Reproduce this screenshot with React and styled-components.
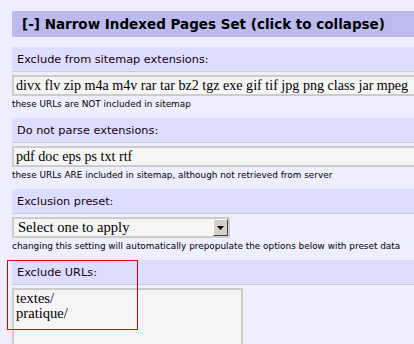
import React from "react";
import styled, { createGlobalStyle } from "styled-components";

const GlobalStyle = createGlobalStyle`
  html, body { margin: 0; padding: 0; background: #eeeeff; }
  body { overflow: hidden; width: 414px; height: 344px; }
`;

const Page = styled.div`
  position: relative;
  padding: 11px 0 0 12px;
  width: 500px;
  font-family: "DejaVu Sans", Verdana, sans-serif;
  color: #000;
`;

const Header = styled.div`
  height: 26px;
  line-height: 26px;
  background: #bbbbee;
  padding-left: 10px;
  font-weight: bold;
  font-size: 13.5px;
  white-space: nowrap;
`;

const Section = styled.div`
  margin-top: ${(p) => (p.$first ? "10px" : "0")};
  padding-bottom: 7px;
`;

const Label = styled.div`
  height: 24px;
  line-height: 25px;
  background: #ddddff;
  border-bottom: 1px solid #cccccc;
  padding-left: 5px;
  font-size: 11.3px;
  white-space: nowrap;
  color: #1a0010;
`;

const TextInput = styled.div`
  margin-top: 3px;
  height: 21px;
  box-sizing: border-box;
  border: 2px solid #cccccc;
  border-right: none;
  background: #f5f5f5;
  font-family: "Liberation Serif", "Times New Roman", serif;
  font-size: 14.1px;
  line-height: 17px;
  padding-left: 2px;
  white-space: nowrap;
  overflow: hidden;
`;

const Hint = styled.div`
  height: 13px;
  line-height: 13px;
  font-size: 8.9px;
  white-space: nowrap;
  color: #000;
  margin-top: 2px;
`;

const SelectBox = styled.div`
  margin-top: 3px;
  width: 218px;
  height: 21px;
  box-sizing: border-box;
  border: 2px solid #cccccc;
  background: #f5f5f5;
  display: flex;
  align-items: stretch;
`;

const SelectText = styled.div`
  flex: 1;
  font-family: "Liberation Serif", "Times New Roman", serif;
  font-size: 14.6px;
  line-height: 17px;
  padding-left: 4px;
  white-space: nowrap;
`;

const SelectButton = styled.div`
  width: 15px;
  box-sizing: border-box;
  background: #d4d0c8;
  border: 1px solid;
  border-color: #ffffff #404040 #404040 #ffffff;
  display: flex;
  align-items: center;
  justify-content: center;
`;

const TextArea = styled.div`
  margin-top: 3px;
  width: 231px;
  height: 80px;
  box-sizing: border-box;
  border: 2px solid #cccccc;
  border-bottom: none;
  background: #f5f5f5;
  font-family: "Liberation Serif", "Times New Roman", serif;
  font-size: 14.6px;
  line-height: 15px;
  padding: 1px 2px;
`;

const Highlight = styled.div`
  position: absolute;
  left: 7px;
  top: 260px;
  width: 131px;
  height: 70px;
  box-sizing: border-box;
  border: 1px solid #e00000;
  pointer-events: none;
`;

export default function App() {
  return (
    <>
      <GlobalStyle />
      <Page>
        <Header>[-] Narrow Indexed Pages Set (click to collapse)</Header>
        <Section $first>
          <Label>Exclude from sitemap extensions:</Label>
          <TextInput>divx flv zip m4a m4v rar tar bz2 tgz exe gif tif jpg png class jar mpeg</TextInput>
          <Hint>these URLs are NOT included in sitemap</Hint>
        </Section>
        <Section>
          <Label>Do not parse extensions:</Label>
          <TextInput>pdf doc eps ps txt rtf</TextInput>
          <Hint>these URLs ARE included in sitemap, although not retrieved from server</Hint>
        </Section>
        <Section>
          <Label>Exclusion preset:</Label>
          <SelectBox>
            <SelectText>Select one to apply</SelectText>
            <SelectButton>
              <svg width="7" height="4" viewBox="0 0 7 4"><path d="M0 0h7L3.5 4z" fill="#000" /></svg>
            </SelectButton>
          </SelectBox>
          <Hint>changing this setting will automatically prepopulate the options below with preset data</Hint>
        </Section>
        <Section>
          <Label>Exclude URLs:</Label>
          <TextArea>textes/<br />pratique/</TextArea>
        </Section>
        <Highlight />
      </Page>
    </>
  );
}
